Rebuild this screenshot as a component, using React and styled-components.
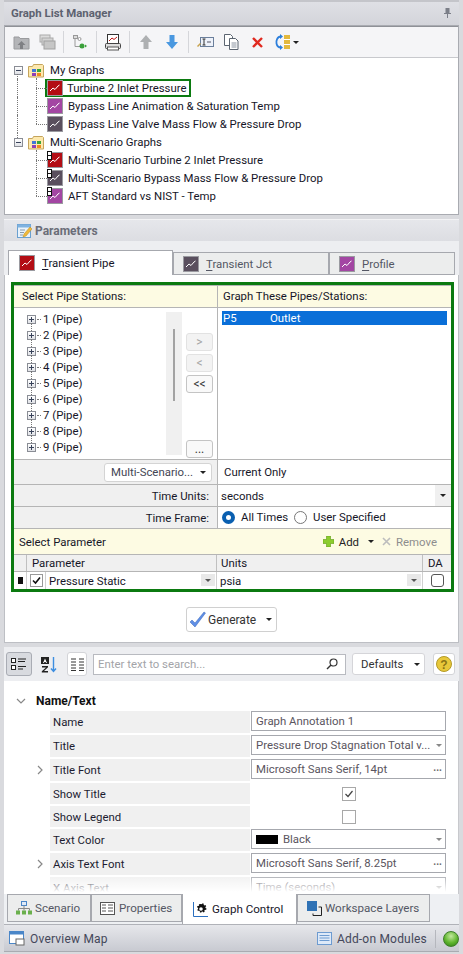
import React from "react";
import styled, { createGlobalStyle } from "styled-components";

const Global = createGlobalStyle`
  html, body { margin: 0; padding: 0; height: 954px; overflow: hidden; background: #d9dade; }
  * { box-sizing: border-box; }
  body { font-family: Roboto, "Liberation Sans", Arial, sans-serif; font-size: 11.4px; color: #161628; }
`;

const Root = styled.div`
  width: 463px; height: 954px; display: flex; flex-direction: column; overflow: hidden;
  background: #d9dade; padding: 0 4px 0 4px;
`;
const TitleBar = styled.div`
  height: 25px; flex: none; display: flex; align-items: center; justify-content: space-between;
  padding: 0 8px 1px 7px; font-weight: bold; color: #5d6270; font-size: 11.4px;
  background: linear-gradient(#dfe0e5, #d3d4da); border-top: 2px solid #c4c5ca;
`;
const Panel = styled.div`
  background: #fff; border: 1px solid #a9abb1; flex: none; height: 190px; display: flex; flex-direction: column;
`;
const Toolbar = styled.div`
  height: 32px; flex: none; display: flex; align-items: center; padding-left: 3px;
  background: #f5f5f7; border-bottom: 1px solid #c8c9cd; border-top: 1px solid #8f9197;
`;
const Slot = styled.span`
  width: 26px; height: 22px; display: inline-flex; align-items: center; justify-content: center; flex: none;
`;
const ToolSep = styled.span`
  width: 7px; height: 22px; flex: none; display: inline-flex; justify-content: center;
  &::before { content: ""; width: 1px; background: #d5d6da; }
`;
const Tree = styled.div`padding: 3px 0 0 9px; display: flex; flex-direction: column;`;
const Row = styled.div`
  height: 18px; display: flex; align-items: center; position: relative; white-space: nowrap;
  padding-left: ${p => (p.$child ? "33px" : "0")};
  ${p => p.$child ? `
    &::before { content: ""; position: absolute; left: 22px; top: 9px; width: 11px; border-top: 1px dotted #777; }
    &::after { content: ""; position: absolute; left: 22px; top: ${p.$first ? -1 : -9}px; height: ${p.$first ? 10 : 18}px; border-left: 1px dotted #777; }
  ` : ""}
`;
const Spine = styled.span`
  position: absolute; left: 3px; top: ${p => p.$top || 0}px; height: ${p => p.$h || 18}px; border-left: 1px dotted #777;
`;
const Expander = styled.span`
  width: 9px; height: 9px; border: 1px solid #8a8d95; background: linear-gradient(#fff, #dfe1e6);
  display: inline-block; position: relative; margin-right: ${p => p.$mr ?? 5}px; flex: none;
  &::before { content: ""; position: absolute; left: 1px; right: 1px; top: 3px; height: 1px; background: #39435a; }
  ${p => p.$plus ? `&::after { content: ""; position: absolute; top: 1px; bottom: 1px; left: 3px; width: 1px; background: #39435a; }` : ""}
`;
const RowLabel = styled.span`padding: 0 1px; margin-left: 4px; line-height: 15px;`;
const Highlight = styled.span`
  display: inline-flex; align-items: center; gap: 4px; border: 2px solid #0b7a10; height: 18px;
  padding: 0 2px 0 0; margin-left: -2px;
`;
const IconWrap = styled.span`position: relative; display: inline-flex; flex: none; width: 16px; height: 16px;`;
const MultiTag = styled.span`
  position: absolute; left: 0; top: -1px; width: 5px; height: 9px; background: #fff; border: 1px solid #111;
  &::after { content: ""; position: absolute; left: 0; right: 0; top: 3px; height: 1px; background: #111; }
`;

const ParamHeader = styled.div`
  height: 22px; margin-top: 4px; flex: none; display: flex; align-items: center; gap: 3px; padding-left: 13px;
  background: linear-gradient(#e6e7eb, #dcdde2); color: #6a6d78; font-weight: bold; font-size: 12px;
  border-top: 1px solid #f3f3f5;
`;
const ParamArea = styled.div`
  height: 402px; flex: none; display: flex; flex-direction: column; background: #eef0f3;
`;
const TabStrip = styled.div`
  height: 34px; flex: none; display: flex; align-items: flex-end; padding: 0 0 0 4px; background: #edeef1;
`;
const Tab = styled.div`
  width: ${p => p.$w}px; height: ${p => (p.$active ? 25 : 23)}px; display: flex; align-items: center; gap: 7px; flex: none;
  padding-left: ${p => (p.$active ? 10 : 9)}px;
  border: 1px solid #a6a8ae; border-bottom: ${p => (p.$active ? "0" : "1px solid #a6a8ae")};
  background: ${p => (p.$active ? "#fff" : "#eceded")};
  color: ${p => (p.$active ? "#161628" : "#545764")};
  u { text-underline-offset: 2px; }
`;
const ParamBody = styled.div`
  flex: 1; background: #fff; border: 1px solid #bdbfc4; border-top: 0; padding: 7px 4px 0 6px;
  display: flex; flex-direction: column; align-items: center;
`;
const GreenBox = styled.div`
  width: 443px; height: 310px; flex: none; border: 3px solid #0b7a10; background: #fff;
  display: grid; grid-template-columns: 204px 1fr; grid-template-rows: 22px 152px 25px 22px 22px 1fr;
`;
const Cell = styled.div`
  border-top: 1px solid #b5b5b5; display: flex; align-items: center; min-width: 0;
  border-right: ${p => (p.$left ? "1px solid #b5b5b5" : "0")};
  background: ${p => p.$bg || "#fff"};
  justify-content: ${p => (p.$end ? "flex-end" : "flex-start")};
  padding: ${p => p.$pad || "0 6px"};
`;
const StationTree = styled.div`
  flex: 1; display: flex; padding: 3px 3px 4px 13px; height: 100%; position: relative;
`;
const StationList = styled.div`flex: 1; display: flex; flex-direction: column; position: relative;`;
const StationRow = styled.div`
  height: 16px; display: flex; align-items: center; position: relative; font-size: 11.400px;
  &::after { content: ""; position: absolute; left: 4px; top: 12px; height: 8px; border-left: 1px dotted #777; }
  &:last-child::after { display: none; }
`;
const Dots = styled.span`width: 4px; border-top: 1px dotted #777; margin: 0 2px 0 -4px;`;
const ScrollTrack = styled.div`
  width: 16px; height: 143px; margin-top: 1px; background: #f0f0f0; flex: none; display: flex; justify-content: center; margin-right: 4px;
  &::before { content: ""; width: 2px; height: 72px; margin-top: 17px; background: #a3a3a3; }
`;
const MoveCol = styled.div`
  width: 27px; flex: none; display: flex; flex-direction: column; gap: 3px; margin-top: 22px; height: 125px; margin-right: 1px;
`;
const MoveBtn = styled.div`
  width: 27px; height: 18px; border-radius: 3px; border: 1px solid ${p => (p.$dis ? "#e2e2e2" : "#c4c4c4")};
  background: ${p => (p.$dis ? "#f3f3f3" : "#f9f9f9")}; color: ${p => (p.$dis ? "#a5a5a5" : "#333")};
  display: flex; align-items: center; justify-content: center; font-size: 12px; line-height: 1;
  margin-top: ${p => (p.$push ? "auto" : "0")};
`;
const PipeList = styled.div`padding: 3px 4px 0 4px; height: 100%; width: 100%;`;
const PipeSel = styled.div`
  background: #0a6fd8; color: #fff; height: 14px; display: flex; align-items: center; padding-left: 1px; width: 100%;
  span:first-child { width: 47px; }
`;
const Combo = styled.div`
  width: 108px; height: 19px; border: 1px solid #d4d4d4; border-radius: 3px; background: #fff; display: flex;
  align-items: center; justify-content: space-between; padding: 0 5px 0 6px; margin-right: 5px; color: #444654;
`;
const Caret = styled.span`
  width: 0; height: 0; border-left: 3px solid transparent; border-right: 3px solid transparent;
  border-top: 3px solid ${p => p.$c || "#222"}; flex: none; display: inline-block;
`;
const RadioDot = styled.span`
  width: 13px; height: 13px; border-radius: 50%; flex: none; display: inline-block;
  border: ${p => (p.$on ? "4px solid #0a5fb0" : "1px solid #777")}; background: #fff;
`;
const RadioGroup = styled.div`display: flex; align-items: center; gap: 6px; margin-top: -1px;`;
const SelectSide = styled.div`
  margin-left: auto; width: 16px; height: 100%; background: #f0f0f0; display: flex; align-items: center; justify-content: center;
`;
const ParamSection = styled.div`grid-column: 1 / 3; display: flex; flex-direction: column; min-height: 0;`;
const SelectBar = styled.div`
  height: 26px; flex: none; display: flex; align-items: center; padding: 0 13px 0 5px; background: #fdfbe3;
  border-top: 1px solid #b5b5b5; border-right: 1px solid #d5d5d5;
`;
const BarBtn = styled.span`
  display: inline-flex; align-items: center; margin-left: ${p => p.$ml || 0}px; color: ${p => p.$c || "#222"};
`;
const GridRow = styled.div`
  display: grid; grid-template-columns: 13px 19px 171px 206px 1fr; height: ${p => p.$h}px; flex: none;
  border-top: 1px solid #b5b5b5;
`;
const HeadCell = styled.div`
  background: #f0f0f0; border-right: 1px solid #c0c0c0; display: flex; align-items: center; padding-left: ${p => p.$pl ?? 4}px;
  overflow: hidden; white-space: nowrap; grid-column: ${p => p.$span || "auto"};
`;
const DataCell = styled.div`
  border-right: 1px solid #d0d0d0; display: flex; align-items: center; padding-left: ${p => p.$pl || 4}px;
  justify-content: ${p => (p.$center ? "center" : "flex-start")}; position: relative;
  background: ${p => p.$bg || "#fff"}; min-width: 0;
`;
const Marker = styled.span`width: 5px; height: 7px; background: #111; display: block;`;
const DropBtn = styled.span`
  position: absolute; right: 1px; top: 2px; width: 14px; height: 12px; background: #e8e8e8; display: flex;
  align-items: center; justify-content: center;
`;
const SmallCheck = styled.span`
  width: 13px; height: 13px; border: 1px solid ${p => p.$c || "#777"}; background: #fff; border-radius: ${p => p.$r || 0}px;
  display: inline-flex; align-items: center; justify-content: center; flex: none;
`;
const GenerateWrap = styled.div`margin: 15px 2px 0 0;`;
const GenerateBtn = styled.div`
  width: 91px; height: 25px; border: 1px solid #d0d0d0; border-radius: 3px; background: #fff; display: flex;
  align-items: center; gap: 2px; padding: 0 4px 0 2px; color: #333; font-size: 12px;
`;
const PropToolbar = styled.div`
  height: 34px; margin-top: 4px; flex: none; display: flex; align-items: center; padding: 0 3px 0 2px; background: #edeef1;
`;
const TBtn = styled.div`
  width: ${p => p.$w || 26}px; height: ${p => p.$h || 24}px; flex: none; display: flex; align-items: center; justify-content: center;
  border-radius: 3px; margin-right: ${p => p.$mr ?? 2}px;
  border: 1px solid ${p => (p.$on ? "#a9acb4" : p.$plain ? "transparent" : "#d3d4d8")};
  background: ${p => (p.$on ? "#d8dadf" : p.$plain ? "transparent" : "#fff")};
`;
const Search = styled.div`
  width: 253px; height: 21px; flex: none; border: 1px solid #b8bac0; background: #fff; display: flex; align-items: center;
  padding: 0 7px 0 4px; color: #a3a4a8; justify-content: space-between; margin-right: 6px;
`;
const Defaults = styled.div`
  width: 73px; height: 22px; flex: none; border: 1px solid #d5d5d9; border-radius: 3px; background: #fff; display: flex;
  align-items: center; justify-content: space-between; padding: 0 4px 0 8px; margin-right: 8px; color: #333;
`;
const PropPanel = styled.div`
  height: 213px; flex: none; background: #fff; position: relative; overflow: hidden;
  padding: 10px 0 0 0; border-right: 1px solid #c8c9cd;
  &::after { content: ""; position: absolute; left: 0; right: 0; bottom: 0; height: 20px; background: linear-gradient(rgba(255,255,255,0), #fff 90%); }
`;
const SectionHead = styled.div`
  height: 20px; display: flex; align-items: center; font-weight: bold; font-size: 12px; color: #111; padding-left: 12px; gap: 8px;
`;
const PropRow = styled.div`
  display: grid; grid-template-columns: 200px 195px; column-gap: 1px; margin: 0 0 2px 46px; height: ${p => p.$h || 22}px;
`;
const PropLabel = styled.div`
  background: #f0f0f0; display: flex; align-items: center; padding: 0 0 0 3px; position: relative; color: #1c1c30;
`;
const Chevron = styled.span`position: absolute; left: -13px; top: 6px; color: #777; display: flex;`;
const PropInput = styled.div`
  height: 20px; border: 1px solid #a6a8ae; background: #fff; display: flex; align-items: center; padding: 0 3px 0 4px;
  color: #5a5560; justify-content: space-between; white-space: nowrap; overflow: hidden;
`;
const PropCheckCell = styled.div`display: flex; align-items: center; justify-content: center;`;
const PropCheck = styled.span`
  width: 14px; height: 14px; border: 1px solid #a8a8a8; background: #fff; display: flex; align-items: center; justify-content: center;
`;
const Ell = styled.span`font-size: 10px; color: #666; line-height: 1; font-weight: bold; margin-bottom: 3px;`;
const ColorSwatch = styled.span`width: 22px; height: 9px; background: #000; margin-right: 5px; flex: none;`;
const InLeft = styled.span`display: inline-flex; align-items: center;`;
const BottomTabs = styled.div`
  height: 30px; flex: none; display: flex; align-items: flex-start; padding-left: 3px; background: #eef0f3; position: relative;
`;
const BTab = styled.div`
  width: ${p => p.$w}px; height: ${p => (p.$active ? 30 : 28)}px; display: flex; align-items: center; gap: 3px; flex: none;
  padding-left: ${p => p.$pl || 8}px; font-size: 11.600px; white-space: nowrap;
  border: 1px solid #a6a8ae; border-top: ${p => (p.$active ? "0" : "1px solid #a6a8ae")}; border-bottom: ${p => (p.$active ? "0" : "1px solid #a6a8ae")};
  background: ${p => (p.$active ? "#fff" : "#eceded")}; color: ${p => (p.$active ? "#161628" : "#545764")};
  position: relative;
`;
const StatusBar = styled.div`
  height: 28px; flex: none; display: flex; align-items: center; padding: 1px 0 0 5px; color: #44475a;
  background: linear-gradient(#e6e7eb, #c8cad1); border-top: 1px solid #b0b2b8; border-bottom: 1px solid #a9abb1; font-size: 12px; letter-spacing: .2px;
`;
const StatusItem = styled.div`display: flex; align-items: center; gap: 5px; margin-left: ${p => (p.$push ? "auto" : "0")};`;
const StatusSep = styled.span`width: 1px; height: 18px; background: #b5b7bd; margin: 0 7px 0 8px;`;
const Orb = styled.span`
  width: 16px; height: 16px; border-radius: 50%; margin-right: 0; flex: none;
  background: radial-gradient(circle at 50% 30%, #c3e89d, #5fb52e 55%, #2c7d14); border: 1px solid #3e7d2a;
`;
const Foot = styled.div`flex: 1; background: #d9dade;`;

const GraphIcon = ({ c }) => (
  <svg width="16" height="16" viewBox="0 0 16 16">
    <rect x=".5" y=".5" width="15" height="15" fill={c} stroke="#9a9aa0" />
    <path d="M3 11l3-3 2 1.500 3-3.500 1.500-1" fill="none" stroke="#fff" strokeWidth="1" />
  </svg>
);
const Folder = () => (
  <svg width="17" height="15" viewBox="0 0 17 15" style={{ flex: "none" }}>
    <path d="M.5 3.500h4l1-2h9l1 1v11.500H.5z" fill="#fde9ae" stroke="#c5a45c" />
    <rect x="4" y="6" width="4" height="3" fill="#3f78d8" /><rect x="9" y="6" width="4" height="3" fill="#3aa53a" />
    <rect x="4" y="10" width="4" height="3" fill="#8f3fb5" /><rect x="9" y="10" width="4" height="3" fill="#ee8a1f" />
  </svg>
);
const Red = "#b30d14", Dark = "#5a4f5e", Purple = "#a346a3";

const TreeItem = ({ c, label, first, multi, hl, spine }) => (
  <Row $child $first={first}>
    {spine && <Spine />}
    {hl ? (
      <Highlight><IconWrap><GraphIcon c={c} /></IconWrap><span>{label}</span></Highlight>
    ) : (
      <>
        <IconWrap><GraphIcon c={c} />{multi && <MultiTag />}</IconWrap>
        <RowLabel>{label}</RowLabel>
      </>
    )}
  </Row>
);

const Arrow = ({ c, d }) => (
  <svg width="16" height="16" viewBox="0 0 16 16" style={{ transform: d ? "rotate(180deg)" : "none" }}>
    <path d="M8 1l6 7h-3.500v7h-5V8H2z" fill={c} />
  </svg>
);

const TopIcons = () => (
  <Toolbar>
    <Slot><svg width="17" height="15" viewBox="0 0 17 15"><path d="M1 2h5l1 1.500h9V14H1z" fill="#b4b5b8" stroke="#9a9b9e" /><path d="M8.500 6l4 4h-2.500v4h-3v-4H4.500z" fill="#7f8084" /></svg></Slot>
    <Slot><svg width="17" height="16" viewBox="0 0 17 16"><rect x="1" y="1" width="10" height="7" fill="#dcdcdc" stroke="#aaa" /><rect x="3" y="4" width="11" height="7" fill="#d2d2d2" stroke="#aaa" /><rect x="5" y="7" width="11" height="8" fill="#c6c6c6" stroke="#a0a0a0" /></svg></Slot>
    <ToolSep />
    <Slot><svg width="14" height="15" viewBox="0 0 14 15"><path d="M2 2.500v9h5M4 2.500H2" fill="none" stroke="#9a9a9a" /><rect x=".5" y=".5" width="4" height="3" fill="#ddd" stroke="#999" /><circle cx="9" cy="11" r="2.500" fill="#3aa03a" /><circle cx="6.500" cy="4" r="1.500" fill="#fff" stroke="#999" /><path d="M12 9.500v3l2-1.500z" fill="#3aa03a" /></svg></Slot>
    <ToolSep />
    <Slot><svg width="16" height="17" viewBox="0 0 16 17"><rect x="2.500" y=".5" width="11" height="9" fill="#fff" stroke="#333" /><path d="M4 7l3-3 2 1.500L12 3" fill="none" stroke="#c01515" /><rect x=".5" y="9.500" width="15" height="5" rx="1" fill="#ddd" stroke="#444" /><rect x="2.500" y="13" width="11" height="3" fill="#fff" stroke="#555" /></svg></Slot>
    <ToolSep />
    <Slot><Arrow c="#aeb0b2" /></Slot>
    <Slot><Arrow c="#4a98e0" d /></Slot>
    <ToolSep />
    <Slot><svg width="17" height="12" viewBox="0 0 17 12"><rect x="3.500" y="1.500" width="13" height="9" fill="#eef2fa" stroke="#6b7f9c" /><path d="M7 3v6M5.500 3h3M5.500 9h3" stroke="#333" fill="none" /><path d="M10 6h4" stroke="#556" /><path d="M0 10l3-3 1 1-3 3z" fill="#c8a24d" /></svg></Slot>
    <Slot><svg width="16" height="16" viewBox="0 0 16 16"><path d="M1.500.5h6l2 2v9h-8z" fill="#fff" stroke="#5b6470" /><path d="M6.500 4.500h6l2.500 2.500v8.500h-8.500z" fill="#fff" stroke="#5b6470" /><path d="M8.500 9h5M8.500 11h5M8.500 13h5" stroke="#8a93a0" /></svg></Slot>
    <Slot><svg width="11" height="11" viewBox="0 0 11 11"><path d="M1 1l9 9M10 1l-9 9" stroke="#e0291f" strokeWidth="2.400" /></svg></Slot>
    <Slot><svg width="16" height="16" viewBox="0 0 16 16"><path d="M6 2.500C2 2.500 1 7 1.500 9.500 2 12 4 13.500 6 13.500" fill="none" stroke="#2d7fdc" strokeWidth="1.800" /><path d="M5 0l3 2.500L5 5zM5 11l3 2.500L5 16z" fill="#2d7fdc" /><rect x="9" y="1" width="6" height="14" fill="#e3b93f" /><path d="M9 5.500h6M9 10.500h6" stroke="#fff" /></svg></Slot>
    <Caret style={{ marginLeft: -3 }} />
  </Toolbar>
);

const stations = [1, 2, 3, 4, 5, 6, 7, 8, 9];

export default function App() {
  return (
    <Root>
      <Global />
      <TitleBar>
        <span>Graph List Manager</span>
        <svg width="7" height="10" viewBox="0 0 7 10"><path d="M1.500 0h4v5h1.500v1H4v4H3V6H0V5h1.500z" fill="#7b7e88" /></svg>
      </TitleBar>
      <Panel>
        <TopIcons />
        <Tree>
          <Row><Expander /><Folder /><RowLabel>My Graphs</RowLabel><Spine $top={13} $h={5} /></Row>
          <TreeItem first spine c={Red} label="Turbine 2 Inlet Pressure" hl />
          <TreeItem spine c={Purple} label="Bypass Line Animation & Saturation Temp" />
          <TreeItem spine c={Dark} label="Bypass Line Valve Mass Flow & Pressure Drop" />
          <Row><Spine $h={5} /><Expander /><Folder /><RowLabel>Multi-Scenario Graphs</RowLabel></Row>
          <TreeItem first multi c={Red} label="Multi-Scenario Turbine 2 Inlet Pressure" />
          <TreeItem multi c={Dark} label="Multi-Scenario Bypass Mass Flow & Pressure Drop" />
          <TreeItem multi c={Purple} label="AFT Standard vs NIST - Temp" />
        </Tree>
      </Panel>
      <ParamHeader>
        <svg width="15" height="15" viewBox="0 0 15 15"><rect x=".5" y="1.500" width="13" height="13" fill="#e8f2fb" stroke="#6aa0d0" /><rect x=".5" y="1.500" width="13" height="3" fill="#7fb2e0" /><path d="M3 7h5M3 9.500h4M3 12h3" stroke="#8899aa" /><path d="M6 14l1-3 6-7 2 2-6 7z" fill="#f0b93a" stroke="#b98a20" strokeWidth=".5" /></svg>
        <span>Parameters</span>
      </ParamHeader>
      <ParamArea>
        <TabStrip>
          <Tab $active $w={165}><GraphIcon c={Red} /><span><u>T</u>ransient Pipe</span></Tab>
          <Tab $w={156}><GraphIcon c={Dark} /><span><u>T</u>ransient Jct</span></Tab>
          <Tab $w={126}><GraphIcon c={Purple} /><span><u>P</u>rofile</span></Tab>
        </TabStrip>
        <ParamBody>
          <GreenBox>
            <Cell $left $bg="#fdfbe3" $pad="0 5px 1px 8px">Select Pipe Stations:</Cell>
            <Cell $bg="#fdfbe3" $pad="0 5px 1px">Graph These Pipes/Stations:</Cell>
            <Cell $left $pad="0">
              <StationTree>
                <StationList>
                  {stations.map(n => (
                    <StationRow key={n}><Expander $plus $mr={5} /><Dots />{n} (Pipe)</StationRow>
                  ))}
                </StationList>
                <ScrollTrack />
                <MoveCol>
                  <MoveBtn $dis>&gt;</MoveBtn>
                  <MoveBtn $dis>&lt;</MoveBtn>
                  <MoveBtn>&lt;&lt;</MoveBtn>
                  <MoveBtn $push>...</MoveBtn>
                </MoveCol>
              </StationTree>
            </Cell>
            <Cell $pad="0" style={{ alignItems: "flex-start" }}>
              <PipeList><PipeSel><span>P5</span><span>Outlet</span></PipeSel></PipeList>
            </Cell>
            <Cell $left $bg="#f0f0f0" $end $pad="0"><Combo><span>Multi-Scenario...</span><Caret /></Combo></Cell>
            <Cell $pad="0 6px">Current Only</Cell>
            <Cell $left $bg="#f0f0f0" $end $pad="0 8px">Time Units:</Cell>
            <Cell $pad="0 0 0 3px">seconds<SelectSide><Caret /></SelectSide></Cell>
            <Cell $left $bg="#f0f0f0" $end $pad="0 8px">Time Frame:</Cell>
            <Cell $pad="0 4px">
              <RadioGroup><RadioDot $on /><span>All Times</span><RadioDot /><span>User Specified</span></RadioGroup>
            </Cell>
            <ParamSection>
              <SelectBar>
                <span>Select Parameter</span>
                <BarBtn style={{ marginLeft: "auto" }}>
                  <svg width="11" height="11" viewBox="0 0 11 11"><path d="M3.500 0h4v3.500H11v4H7.500V11h-4V7.500H0v-4h3.500z" fill="#8ccc2e" stroke="#5e9b14" strokeWidth=".6" /></svg>
                  <span style={{ marginLeft: 5 }}>Add</span>
                  <Caret style={{ marginLeft: 9 }} />
                </BarBtn>
                <BarBtn $ml={8} $c="#8d8d8d">
                  <svg width="9" height="9" viewBox="0 0 9 9"><path d="M1 1l7 7M8 1L1 8" stroke="#bdbdbd" strokeWidth="1.600" /></svg>
                  <span style={{ marginLeft: 5 }}>Remove</span>
                </BarBtn>
              </SelectBar>
              <GridRow $h={17}>
                <HeadCell $pl={0} />
                <HeadCell $span="2 / 4" $pl={5}>Parameter</HeadCell>
                <HeadCell>Units</HeadCell>
                <HeadCell $pl={5} style={{ borderRight: 0 }}>DA</HeadCell>
              </GridRow>
              <GridRow $h={18}>
                <DataCell $center $pl={1}><Marker /></DataCell>
                <DataCell $center $pl={1}><SmallCheck $c="#999"><svg width="9" height="9" viewBox="0 0 9 9"><path d="M1 4.500l2.500 2.500L8 1.500" fill="none" stroke="#111" strokeWidth="1.600" /></svg></SmallCheck></DataCell>
                <DataCell $pl={3}>Pressure Static<DropBtn><Caret $c="#555" /></DropBtn></DataCell>
                <DataCell $pl={3}>psia<DropBtn><Caret $c="#555" /></DropBtn></DataCell>
                <DataCell $center $pl={1} style={{ borderRight: 0 }}><SmallCheck $r={3} $c="#555" /></DataCell>
              </GridRow>
            </ParamSection>
          </GreenBox>
          <GenerateWrap>
            <GenerateBtn>
              <svg width="17" height="17" viewBox="0 0 17 17"><path d="M1 11l2-2 3 3L15 1l1.500 1L6 16z" fill="#5f8fe6" stroke="#3a66b8" strokeWidth=".5" /></svg>
              <span>Generate</span>
              <Caret style={{ marginLeft: "auto" }} />
            </GenerateBtn>
          </GenerateWrap>
        </ParamBody>
      </ParamArea>
      <PropToolbar>
        <TBtn $on $w={26} $mr={7}><svg width="16" height="12" viewBox="0 0 16 12"><rect x=".5" y=".5" width="4" height="4" fill="#fff" stroke="#222" /><rect x=".5" y="7.500" width="4" height="4" fill="#fff" stroke="#222" /><path d="M7 1h8M7 3.500h7M7 8.500h8M7 11h5" stroke="#222" /></svg></TBtn>
        <TBtn $plain $w={20} $mr={8}><svg width="17" height="17" viewBox="0 0 17 17"><rect x="0" y="1" width="8" height="7" fill="#222" /><path d="M4 2.500L2 7h1l.3-1h1.400l.3 1h1z" fill="#fff" /><path d="M1 10h6v1.300L3 15h4v1.500H.8v-1.300L5 11.400H1z" fill="#222" /><path d="M12.500 1v14M10 12.500l2.500 3 2.500-3" fill="none" stroke="#3d8ee0" strokeWidth="1.400" /></svg></TBtn>
        <TBtn $w={20} $mr={6}><svg width="13" height="13" viewBox="0 0 13 13"><path d="M0 1h5M8 1h5M0 4h5M8 4h5M0 7h5M8 7h5M0 10h5M8 10h5M0 12.500h5M8 12.500h5" stroke="#333" /></svg></TBtn>
        <Search><span>Enter text to search...</span><svg width="12" height="12" viewBox="0 0 12 12"><circle cx="7.500" cy="4.500" r="3.500" fill="none" stroke="#333" strokeWidth="1.200" /><path d="M5 7L1 11" stroke="#333" strokeWidth="1.400" /></svg></Search>
        <Defaults><span>Defaults</span><Caret /></Defaults>
        <TBtn $w={22} $h={22} $mr={0}><svg width="16" height="16" viewBox="0 0 16 16"><circle cx="8" cy="8" r="7.500" fill="#e8c83a" stroke="#b39a28" /><text x="8" y="12.500" fontSize="12" fontWeight="bold" textAnchor="middle" fill="#8a7414" fontFamily="Liberation Sans">?</text></svg></TBtn>
      </PropToolbar>
      <PropPanel>
        <SectionHead>
          <svg width="10" height="6" viewBox="0 0 10 6"><path d="M1 1l4 4 4-4" fill="none" stroke="#888" strokeWidth="1.200" /></svg>
          <span style={{ marginLeft: 2 }}>Name/Text</span>
        </SectionHead>
        <PropRow $h={22}><PropLabel>Name</PropLabel><PropInput>Graph Annotation 1</PropInput></PropRow>
        <PropRow $h={22}><PropLabel>Title</PropLabel><PropInput><span>Pressure Drop Stagnation Total v...</span><Caret $c="#888" /></PropInput></PropRow>
        <PropRow $h={22}><PropLabel><Chevron><svg width="6" height="10" viewBox="0 0 6 10"><path d="M1 1l4 4-4 4" fill="none" stroke="#888" strokeWidth="1.200" /></svg></Chevron>Title Font</PropLabel><PropInput><span>Microsoft Sans Serif, 14pt</span><Ell>...</Ell></PropInput></PropRow>
        <PropRow $h={21}><PropLabel>Show Title</PropLabel><PropCheckCell><PropCheck><svg width="10" height="10" viewBox="0 0 10 10"><path d="M1.500 5l2.500 2.500L8.500 2" fill="none" stroke="#444" strokeWidth="1.200" /></svg></PropCheck></PropCheckCell></PropRow>
        <PropRow $h={21}><PropLabel>Show Legend</PropLabel><PropCheckCell><PropCheck /></PropCheckCell></PropRow>
        <PropRow $h={22}><PropLabel>Text Color</PropLabel><PropInput><InLeft><ColorSwatch />Black</InLeft><Caret $c="#888" /></PropInput></PropRow>
        <PropRow $h={22}><PropLabel><Chevron><svg width="6" height="10" viewBox="0 0 6 10"><path d="M1 1l4 4-4 4" fill="none" stroke="#888" strokeWidth="1.200" /></svg></Chevron>Axis Text Font</PropLabel><PropInput><span>Microsoft Sans Serif, 8.25pt</span><Ell>...</Ell></PropInput></PropRow>
        <PropRow $h={22}><PropLabel>X Axis Text</PropLabel><PropInput><span>Time (seconds)</span><Caret $c="#888" /></PropInput></PropRow>
      </PropPanel>
      <BottomTabs>
        <BTab $w={84} $pl={8}>
          <svg width="16" height="14" viewBox="0 0 16 14"><rect x="5.500" y=".5" width="5" height="4" fill="#dfeaf8" stroke="#4a86c8" /><path d="M8 4.500v3M2.500 9.500v-2h11v2M8 7.500v2" fill="none" stroke="#888" /><rect x="0" y="9.500" width="4" height="4" fill="#6ab04c" /><rect x="6" y="9.500" width="4" height="4" fill="#6ab04c" /><rect x="12" y="9.500" width="4" height="4" fill="#6ab04c" /></svg>
          Scenario
        </BTab>
        <BTab $w={91} $pl={8}>
          <svg width="15" height="13" viewBox="0 0 15 13"><rect x=".5" y=".5" width="14" height="12" fill="#fff" stroke="#555" /><path d="M2 3h4M2 6h4M2 9h4M8 3h5M8 6h5M8 9h5" stroke="#555" /></svg>
          <span style={{ marginLeft: 1 }}>Properties</span>
        </BTab>
        <BTab $active $w={115} $pl={10}>
          <svg width="15" height="15" viewBox="0 0 15 15"><path d="M.5 0v14.500H15" fill="none" stroke="#2a6fc0" /><path d="M8 2l1 .2.500-1 1.300.5-.2 1.100.9.700 1-.5.700 1.200-.8.800.1 1.100 1 .5-.4 1.300-1.100-.1-.700.900.4 1-1.200.7-.8-.8-1.100.1-.5 1-1.300-.4.100-1.100-.9-.7-1 .4-.7-1.200.8-.8-.1-1.100-1-.5.4-1.300 1.100.1.700-.9-.4-1z" fill="#111" /><circle cx="8" cy="7" r="1.800" fill="#fff" /></svg>
          <span style={{ marginLeft: 1 }}>Graph Control</span>
        </BTab>
        <BTab $w={133} $pl={9}>
          <svg width="15" height="15" viewBox="0 0 15 15"><rect x="0" y="0" width="10" height="10" fill="#2f72b5" /><path d="M11.500 6H14.500V14.500H6v-2" fill="none" stroke="#222" /></svg>
          <span>Workspace Layers</span>
        </BTab>
      </BottomTabs>
      <StatusBar>
        <StatusItem>
          <svg width="16" height="15" viewBox="0 0 16 15"><rect x=".5" y=".5" width="14" height="12" fill="#fff" stroke="#4a86c8" /><rect x=".5" y=".5" width="14" height="3" fill="#4a86c8" /><rect x="7" y="8" width="8" height="6" fill="#fff" stroke="#666" /></svg>
          Overview Map
        </StatusItem>
        <StatusItem $push>
          <svg width="15" height="13" viewBox="0 0 15 13"><rect x=".5" y=".5" width="14" height="12" fill="#dde9f8" stroke="#6d9bd0" /><path d="M2.500 3.500h10M2.500 6h10M2.500 8.500h10" stroke="#6d9bd0" /></svg>
          Add-on Modules
        </StatusItem>
        <StatusSep />
        <Orb />
      </StatusBar>
      <Foot />
    </Root>
  );
}
